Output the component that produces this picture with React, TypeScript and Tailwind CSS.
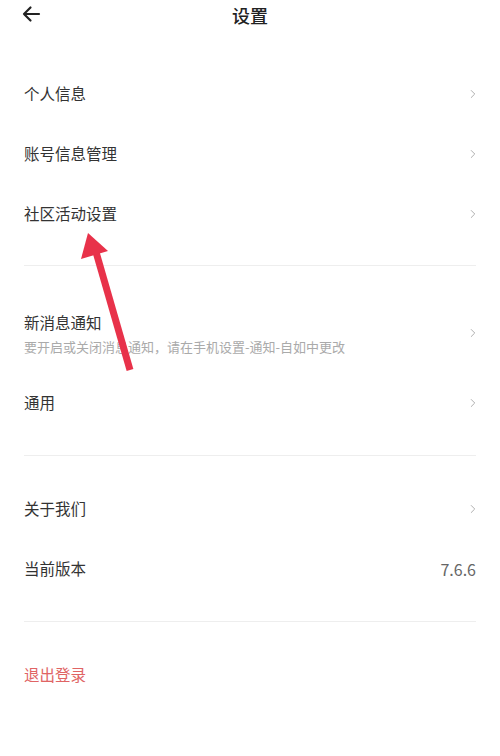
import { ChevronRight } from 'lucide-react'

const font = { fontFamily: '"Noto Sans CJK SC", "Noto Sans", sans-serif' }

function Row({ label, right }: { label: string; right?: string }) {
  return (
    <div className="flex h-[60px] items-center justify-between">
      <span className="text-[15.5px] text-[#333]">{label}</span>
      {right ? (
        <span className="text-[16px] text-[#666]">{right}</span>
      ) : (
        <ChevronRight className="-mr-1 h-[14px] w-[14px] text-[#aaa]" strokeWidth={1.6} />
      )}
    </div>
  )
}

export default function App() {
  return (
    <div className="relative min-h-[756px] w-[500px] bg-white" style={font}>
      {/* header */}
      <div className="relative flex h-[30px] items-center justify-center">
        <svg
          className="absolute left-[21px] top-[5px]"
          width="20"
          height="18"
          viewBox="0 0 20 18"
          fill="none"
          stroke="#222"
          strokeWidth="2.2"
          strokeLinecap="round"
          strokeLinejoin="round"
        >
          <path d="M18 9H3M9.5 2.5L3 9l6.5 6.5" />
        </svg>
        <h1 className="text-[18px] font-medium text-[#222]">设置</h1>
      </div>

      <div className="px-6">
        {/* section 1 */}
        <div className="pt-[34px] pb-[21px]">
          <Row label="个人信息" />
          <Row label="账号信息管理" />
          <Row label="社区活动设置" />
        </div>
        <div className="h-px bg-[#eee]" />

        {/* section 2 */}
        <div className="pt-[27px] pb-[22px]">
          <div className="flex h-[80px] items-center justify-between">
            <div className="flex flex-col">
              <span className="text-[15.5px] leading-[24px] text-[#333]">新消息通知</span>
              <span className="mt-[3px] text-[13px] leading-[20px] text-[#aaa]">
                要开启或关闭消息通知，请在手机设置-通知-自如中更改
              </span>
            </div>
            <ChevronRight className="-mr-1 h-[14px] w-[14px] text-[#aaa]" strokeWidth={1.6} />
          </div>
          <Row label="通用" />
        </div>
        <div className="h-px bg-[#eee]" />

        {/* section 3 */}
        <div className="pt-[23px] pb-[22px]">
          <Row label="关于我们" />
          <Row label="当前版本" right="7.6.6" />
        </div>
        <div className="h-px bg-[#eee]" />

        {/* section 4 */}
        <div className="pt-[23px]">
          <div className="flex h-[60px] items-center">
            <span className="text-[15.5px] text-[#e06464]">退出登录</span>
          </div>
        </div>
      </div>

      {/* annotation arrow */}
      <svg
        className="pointer-events-none absolute left-0 top-0"
        width="500"
        height="756"
        viewBox="0 0 500 756"
      >
        <line x1="130" y1="370" x2="96" y2="252" stroke="#e8324a" strokeWidth="7" />
        <polygon points="88,233 81,259 108,251" fill="#e8324a" />
      </svg>
    </div>
  )
}
